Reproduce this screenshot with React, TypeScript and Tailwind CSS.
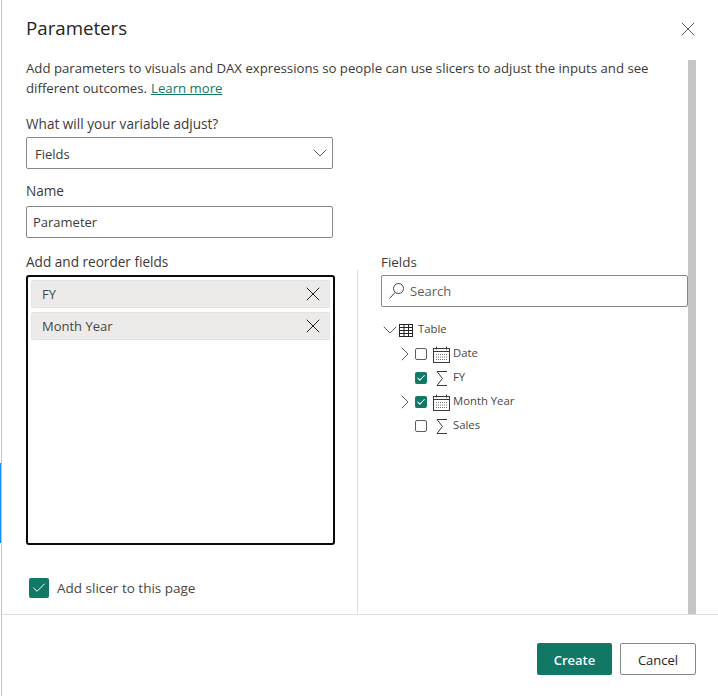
import { ChevronDown, ChevronRight, X, Check } from "lucide-react";

const fontStack = "font-['Open_Sans',sans-serif]";

function CalendarIcon() {
  return (
    <svg width="17" height="17" viewBox="0 0 17 17" fill="none" stroke="#3b3a39" strokeWidth="1">
      <rect x="0.5" y="2.5" width="16" height="14" />
      <path d="M0.5 5.5H16.5M3.5 0.5V3.5M13.5 0.5V3.5" />
      <path d="M3 8.5h11M3 11h11M3 13.5h11" strokeDasharray="1 1" stroke="#777" />
    </svg>
  );
}

function SigmaIcon() {
  return (
    <svg width="12" height="15" viewBox="0 0 12 15" fill="none" stroke="#3b3a39" strokeWidth="1">
      <path d="M11 0.5H1L6.5 7.5L1 14.5H11" />
    </svg>
  );
}

function TableIcon() {
  return (
    <svg width="14" height="13" viewBox="0 0 14 13" fill="none" stroke="#252423" strokeWidth="1">
      <rect x="0.5" y="0.5" width="13" height="12" />
      <path d="M0.5 3.5H13.5M0.5 6.5H13.5M0.5 9.5H13.5M5 0.5V12.5M9.5 0.5V12.5" />
    </svg>
  );
}

function SearchIcon() {
  return (
    <svg width="15" height="16" viewBox="0 0 15 16" fill="none" stroke="#484644" strokeWidth="1">
      <circle cx="9.5" cy="5.5" r="5" />
      <path d="M6 9.5L0.5 15.5" />
    </svg>
  );
}

function TreeCheck({ checked }: { checked: boolean }) {
  return checked ? (
    <span className="ml-[2px] flex h-3 w-3 items-center justify-center rounded-[2px] bg-[#117865]">
      <Check size={10} strokeWidth={2.5} className="text-white" />
    </span>
  ) : (
    <span className="ml-[2px] h-3 w-3 rounded-[2px] border border-[#605e5c]" />
  );
}

const treeRows = [
  { label: "Date", expand: true, checked: false, icon: "calendar" },
  { label: "FY", expand: false, checked: true, icon: "sigma" },
  { label: "Month Year", expand: true, checked: true, icon: "calendar" },
  { label: "Sales", expand: false, checked: false, icon: "sigma" },
];

export default function App() {
  return (
    <div className={`${fontStack} flex h-[696px] w-[718px] overflow-hidden bg-white text-[13px] text-[#252423]`}>
      <div className="w-[1px] shrink-0">
        <div className="mt-[463px] h-[80px] bg-[#118dff]" />
      </div>

      <div className="flex w-[717px] flex-col border-l border-l-[#c8c6c4]">
        <div className="flex h-[58px] items-start justify-between pl-[24px] pr-[18px] pt-[14px]">
          <h1 className="text-[18.7px] leading-[28px] font-medium text-[#252423]">Parameters</h1>
          <X size={24} strokeWidth={1} className="mt-[3px] text-[#605e5c]" />
        </div>

        <div className="flex h-[557px] border-b border-b-[#e1dfdd]">
          <div className="w-[686px]">
            <div className="pl-[24px]">
              <div className="w-[640px] text-[13.2px] leading-[20px] text-[#3b3a39]">
                <p>Add parameters to visuals and DAX expressions so people can use slicers to adjust the inputs and see</p>
                <p className="flex gap-[4px]">
                  <span>different outcomes.</span>
                  <a className="text-[#117865] underline">Learn more</a>
                </p>
              </div>
              <label className="mt-[17px] block text-[13.6px] leading-[18px] font-medium text-[#3b3a39]">
                What will your variable adjust?
              </label>
              <div className="mt-[4px] flex h-[32px] w-[307px] items-center justify-between rounded-[2px] border border-[#8a8886] pl-[8px] text-[#3b3a39]">
                <span className="pt-[3px]">Fields</span>
                <ChevronDown size={24} strokeWidth={1} className="text-[#605e5c]" />
              </div>
              <label className="mt-[13px] block text-[13.6px] leading-[18px] font-medium text-[#3b3a39]">Name</label>
              <div className="mt-[6px] flex h-[32px] w-[307px] items-center rounded-[2px] border border-[#8a8886] pl-[6px] pt-[1px] text-[#3b3a39]">
                Parameter
              </div>
            </div>

            <div className="mt-[15px] flex h-[360px]">
              <div className="w-[355px] pl-[24px]">
                <label className="block text-[13.6px] leading-[18px] font-medium text-[#3b3a39]">Add and reorder fields</label>
                <div className="mt-[4px] flex h-[270px] w-[309px] flex-col gap-[4px] rounded-[3px] border-2 border-[#0b0a0a] p-[3px]">
                  {["FY", "Month Year"].map((field) => (
                    <div
                      key={field}
                      className="flex h-[28px] items-center justify-between rounded-[2px] border border-[#e6e4e2] bg-[#edebe9] pl-[10px] pr-[4px] text-[#484644]"
                    >
                      <span className="pt-[1px]">{field}</span>
                      <X size={24} strokeWidth={1} className="text-[#252423]" />
                    </div>
                  ))}
                </div>
                <div className="mt-[33px] ml-[3px] flex items-center gap-[8px]">
                  <span className="flex h-[20px] w-[20px] items-center justify-center rounded-[2px] bg-[#117865]">
                    <Check size={16} strokeWidth={1.5} className="text-white" />
                  </span>
                  <span className="text-[13.5px] text-[#484644]">Add slicer to this page</span>
                </div>
              </div>

              <div className="mt-[17px] w-[1px] bg-[#e1dfdd]" />

              <div className="w-[330px] pl-[23px]">
                <label className="block text-[13.4px] leading-[18px] font-medium text-[#3b3a39]">Fields</label>
                <div className="mt-[4px] flex h-[32px] w-[307px] items-center gap-[6px] rounded-[2px] border border-[#8a8886] pl-[7px] text-[#605e5c]">
                  <SearchIcon />
                  <span className="pt-[1px]">Search</span>
                </div>
                <div className="mt-[11px] flex h-[24px] items-center text-[11.3px] text-[#484644]">
                  <span className="ml-[1px] flex w-[16px] justify-center">
                    <ChevronDown size={24} strokeWidth={1} className="shrink-0 text-[#605e5c]" />
                  </span>
                  <span className="ml-[1px]"><TableIcon /></span>
                  <span className="ml-[5px] pb-[2px]">Table</span>
                </div>
                {treeRows.map((row) => (
                  <div key={row.label} className="flex h-[24px] items-center text-[11.3px] text-[#484644]">
                    <span className="ml-[16px] flex w-[16px] justify-center">
                      {row.expand && <ChevronRight size={24} strokeWidth={1} className="shrink-0 text-[#605e5c]" />}
                    </span>
                    <TreeCheck checked={row.checked} />
                    <span className="ml-[6px] flex w-[17px] justify-center">
                      {row.icon === "calendar" ? <CalendarIcon /> : <SigmaIcon />}
                    </span>
                    <span className="ml-[3px] pb-[2px]">{row.label}</span>
                  </div>
                ))}
              </div>
            </div>
          </div>
          <div className="mt-[2px] w-[8px] bg-[#c8c6c4]" />
        </div>

        <div className="flex flex-1 items-start justify-end gap-[8px] pr-[22px] pt-[28px]">
          <button className="h-[32px] w-[75px] rounded-[2px] bg-[#117865] pt-[3px] text-[13px] font-semibold text-white">Create</button>
          <button className="h-[32px] w-[76px] rounded-[2px] border border-[#8a8886] bg-white pt-[3px] text-[13px] font-medium text-[#252423]">Cancel</button>
        </div>
      </div>
    </div>
  );
}
